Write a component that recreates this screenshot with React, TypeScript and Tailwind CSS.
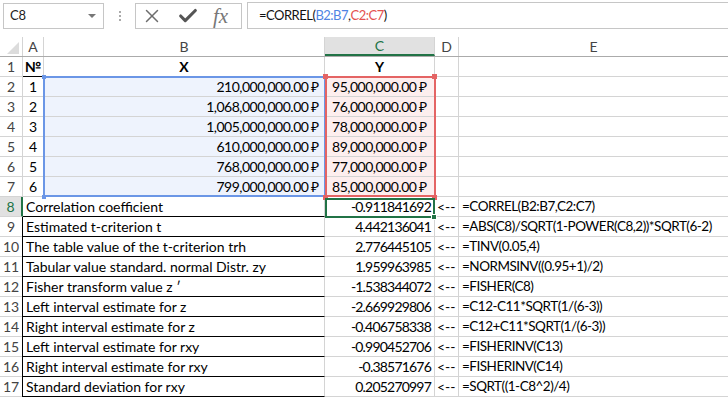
import { X, Check } from 'lucide-react'

type Row = { label: string; value: string; formula: string }

const DATA = [
  ['210,000,000.00 ₽', '95,000,000.00 ₽'],
  ['1,068,000,000.00 ₽', '76,000,000.00 ₽'],
  ['1,005,000,000.00 ₽', '78,000,000.00 ₽'],
  ['610,000,000.00 ₽', '89,000,000.00 ₽'],
  ['768,000,000.00 ₽', '77,000,000.00 ₽'],
  ['799,000,000.00 ₽', '85,000,000.00 ₽'],
]

const CALC: Row[] = [
  { label: 'Correlation coefficient', value: '-0.911841692', formula: '=CORREL(B2:B7,C2:C7)' },
  { label: 'Estimated t-criterion t', value: '4.442136041', formula: '=ABS(C8)/SQRT(1-POWER(C8,2))*SQRT(6-2)' },
  { label: 'The table value of the t-criterion trh', value: '2.776445105', formula: '=TINV(0.05,4)' },
  { label: 'Tabular value standard. normal Distr. zy', value: '1.959963985', formula: '=NORMSINV((0.95+1)/2)' },
  { label: 'Fisher transform value z ʹ', value: '-1.538344072', formula: '=FISHER(C8)' },
  { label: 'Left interval estimate for z', value: '-2.669929806', formula: '=C12-C11*SQRT(1/(6-3))' },
  { label: 'Right interval estimate for z', value: '-0.406758338', formula: '=C12+C11*SQRT(1/(6-3))' },
  { label: 'Left interval estimate for rxy', value: '-0.990452706', formula: '=FISHERINV(C13)' },
  { label: 'Right interval estimate for rxy', value: '-0.38571676', formula: '=FISHERINV(C14)' },
  { label: 'Standard deviation for rxy', value: '0.205270997', formula: '=SQRT((1-C8^2)/4)' },
]

const cell = 'h-full flex items-center border-r border-b border-[#d4d4d4] overflow-hidden whitespace-nowrap'

function RowHead({ n, active }: { n: number; active?: boolean }) {
  return active ? (
    <div className="w-[23px] h-full flex items-center justify-center bg-[#e1e1e1] border-r-2 border-[#217346] border-b border-b-[#d4d4d4] text-[#217346]">
      {n}
    </div>
  ) : (
    <div className="w-[23px] h-full flex items-center justify-center border-r border-b border-[#d4d4d4] text-[#444]">
      {n}
    </div>
  )
}

function FormulaBar() {
  return (
    <div className="h-[37px] flex items-start pt-[3px] text-[13px]">
      <div className="ml-[3px] w-[101px] h-[26px] border border-[#c6c6c6] flex items-center justify-between pl-[6px] pr-[7px] text-[#222] tracking-[-0.3px]">
        <span>C8</span>
        <span className="w-0 h-0 border-l-[4px] border-r-[4px] border-t-[4px] border-l-transparent border-r-transparent border-t-[#777]" />
      </div>
      <div className="w-[31px] h-[26px] flex flex-col items-center justify-center gap-[2px]">
        <span className="w-[2px] h-[2px] bg-[#aaa]" />
        <span className="w-[2px] h-[2px] bg-[#aaa]" />
        <span className="w-[2px] h-[2px] bg-[#aaa]" />
      </div>
      <div className="w-[107px] h-[26px] border border-[#c6c6c6] flex items-center pl-[5px] gap-[14px] text-[#6d6d6d]">
        <X size={22} strokeWidth={1.6} />
        <Check size={22} strokeWidth={3.4} className="text-[#555]" />
        <span className="font-['Liberation_Serif',serif] italic text-[21px] leading-none text-[#777]">fx</span>
      </div>
      <div className="ml-[5px] flex-1 h-[27px] -mt-[1px] border border-r-0 border-[#c6c6c6] flex items-center pl-[11px] text-[#111] tracking-[-0.5px]">
        <span>=CORREL(</span>
        <span className="text-[#4f83e3]">B2:B7</span>
        <span>,</span>
        <span className="text-[#e4524f]">C2:C7</span>
        <span>)</span>
      </div>
    </div>
  )
}

function Sheet() {
  return (
    <div className="text-[14px]">
      <div className="flex h-[20px] border-b border-[#ababab] text-[#444]">
        <div className="w-[23px] h-full border-r border-[#d4d4d4] flex items-end justify-end pr-[3px] pb-[2px]">
          <span className="w-0 h-0 border-l-[12px] border-b-[12px] border-l-transparent border-b-[#dcdcdc]" />
        </div>
        <div className="w-[21px] h-full border-r border-[#d4d4d4] flex items-center justify-center">A</div>
        <div className="w-[281px] h-full border-r border-[#d4d4d4] flex items-center justify-center">B</div>
        <div className="w-[110px] h-full border-r border-[#d4d4d4] bg-[#e1e1e1] border-b-2 border-b-[#217346] -mb-px flex items-center justify-center text-[#217346]">C</div>
        <div className="w-[24px] h-full border-r border-[#d4d4d4] flex items-center justify-center">D</div>
        <div className="flex-1 h-full flex items-center justify-center">E</div>
      </div>

      <div className="relative">
        <div className="flex h-[20px]">
          <RowHead n={1} />
          <div className={`${cell} w-[21px] justify-center font-bold border-b-black`}>№</div>
          <div className={`${cell} w-[281px] justify-center font-bold`}>X</div>
          <div className={`${cell} w-[110px] justify-center font-bold`}>Y</div>
          <div className={`${cell} w-[24px]`} />
          <div className={`${cell} flex-1 border-r-0`} />
        </div>

        {DATA.map(([x, y], i) => (
          <div key={i} className="flex h-[20px]">
            <RowHead n={i + 2} />
            <div className={`${cell} w-[21px] justify-center`}>{i + 1}</div>
            <div className={`${cell} w-[281px] justify-end pr-[5px] bg-[#eef3fd] tracking-[-0.5px]`}>{x}</div>
            <div className={`${cell} w-[110px] justify-end pr-[7px] bg-[#fdeeee] tracking-[-0.5px]`}>{y}</div>
            <div className={`${cell} w-[24px]`} />
            <div className={`${cell} flex-1 border-r-0`} />
          </div>
        ))}

        {CALC.map((r, i) => (
          <div key={i} className="flex h-[20px]">
            <RowHead n={i + 8} active={i === 0} />
            <div className={`${cell} w-[302px] pl-[3px] border-b-black ${i === 0 ? '' : 'border-l border-l-black -ml-px w-[303px]'}`}>
              {r.label}
            </div>
            <div className={`${cell} w-[110px] justify-end pr-[3px] tracking-[-0.8px]`}>{r.value}</div>
            <div className={`${cell} w-[24px] pl-[2px]`}>&lt;--</div>
            <div className={`${cell} flex-1 min-w-0 border-r-0 pl-[3px] text-[13.5px] tracking-[-0.5px]`}>{r.formula}</div>
          </div>
        ))}

        {/* range highlights */}
        <div className="absolute left-[43px] top-[19px] w-[283px] h-[121px] border-2 border-[#6b96e6] pointer-events-none" />
        <div className="absolute left-[325px] top-[19px] w-[111px] h-[121px] border-2 border-[#e46464] pointer-events-none" />
        <span className="absolute left-[42px] top-[18px] w-[4px] h-[4px] bg-[#6b96e6]" />
        <span className="absolute left-[42px] top-[138px] w-[4px] h-[4px] bg-[#6b96e6]" />
        <span className="absolute left-[323px] top-[17px] w-[5px] h-[5px] bg-[#e46464]" />
        <span className="absolute left-[432px] top-[17px] w-[5px] h-[5px] bg-[#e46464]" />
        <span className="absolute left-[323px] top-[138px] w-[5px] h-[5px] bg-[#e46464]" />
        <span className="absolute left-[432px] top-[138px] w-[5px] h-[5px] bg-[#e46464]" />

        {/* active cell C8 */}
        <div className="absolute left-[325px] top-[141px] w-[110px] h-[20px] border-2 border-[#217346] pointer-events-none" />
        <span className="absolute left-[431px] top-[157px] w-[6px] h-[6px] bg-[#217346] border border-white" />
      </div>
    </div>
  )
}

export default function App() {
  return (
    <div className="w-[728px] h-[399px] overflow-hidden bg-white text-black font-['Lato','Liberation_Sans',sans-serif]">
      <FormulaBar />
      <Sheet />
    </div>
  )
}
